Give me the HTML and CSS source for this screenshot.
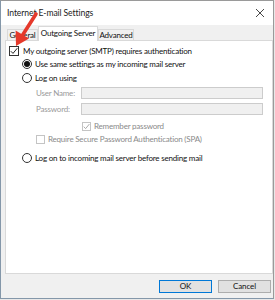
FILE: index.html
```html
<!DOCTYPE html>
<html>
<head>
  <meta charset='utf-8'>
  <title>Internet E-mail Settings</title>
  <link rel="stylesheet" href="styles.css">
</head>
<body>
  <div class="window">
    <div class="titlebar">
      <span class="title">Internet E-mail Settings</span>
      <svg class="close" width="10" height="10" viewBox="0 0 10 10"><path d="M1 1L9 9M9 1L1 9" stroke="#333" stroke-width="0.9" fill="none"/></svg>
    </div>
    <div class="main">
      <div class="tabs">
        <div class="tab general">General</div>
        <div class="tab active outgoing">Outgoing Server</div>
        <div class="tab advanced">Advanced</div>
      </div>
      <div class="panel">
        <div class="row r1">
          <span class="box"><svg width="8" height="8" viewBox="0 0 8 8"><path d="M0.8 4.2L3 6.4L7.3 1.2" stroke="#222" stroke-width="1" fill="none"/></svg></span>
          <span>My outgoing server (SMTP) requires authentication</span>
        </div>
        <div class="row r2 indent1">
          <span class="radio on"></span>
          <span>Use same settings as my incoming mail server</span>
        </div>
        <div class="row r3 indent1">
          <span class="radio"></span>
          <span>Log on using</span>
        </div>
        <div class="row field r4 indent2">
          <span class="label">User Name:</span>
          <span class="input"></span>
        </div>
        <div class="row field r5 indent2">
          <span class="label">Password:</span>
          <span class="input"></span>
        </div>
        <div class="row r6 indent3 disabled">
          <span class="box small off"><svg width="7" height="7" viewBox="0 0 8 8"><path d="M0.8 4.2L3 6.4L7.3 1.2" stroke="#a0a0a0" stroke-width="1" fill="none"/></svg></span>
          <span>Remember password</span>
        </div>
        <div class="row r7 indent2 disabled">
          <span class="box small off"></span>
          <span>Require Secure Password Authentication (SPA)</span>
        </div>
        <div class="row r8 indent1">
          <span class="radio"></span>
          <span>Log on to incoming mail server before sending mail</span>
        </div>
      </div>
      <div class="buttons">
        <button class="btn default">OK</button>
        <button class="btn">Cancel</button>
      </div>
    </div>
    <svg class="arrow" width="40" height="50" viewBox="0 0 40 50">
      <line x1="36" y1="14" x2="22" y2="36" stroke="#e5392b" stroke-width="3.6" stroke-linecap="round"/>
      <polygon points="16,46 29,38.4 15.6,30.6" fill="#e5392b"/>
    </svg>
  </div>
</body>
</html>
```

FILE: styles.css
```css
* {
  box-sizing: border-box;
}
body {
  margin: 0;
  background: #e8e8e8;
  font-family: Lato, "Noto Sans", sans-serif;
  font-size: 8px;
  letter-spacing: -0.2px;
  color: #111;
}
.window {
  position: relative;
  width: 274px;
  height: 299px;
  border: 1px solid #8497a9;
  border-top-color: #9a9a9a;
  border-right-color: #9a9a9a;
  background: #f0f0f0;
}
.titlebar {
  height: 24px;
  background: #fff;
  display: flex;
  align-items: center;
  justify-content: space-between;
  padding: 0 6px 0 6px;
}
.title {
  font-size: 8.6px;
  letter-spacing: -0.1px;
  color: #222;
}
.close {
  margin-right: 2px;
}
.main {
  padding: 1px 0 0 4px;
}
.tabs {
  height: 14px;
  display: flex;
  align-items: flex-end;
  padding-left: 2px;
}
.tab {
  height: 11px;
  line-height: 10px;
  text-align: center;
  border: 1px solid #d9d9d9;
  border-bottom: none;
  background: #f0f0f0;
  color: #111;
}
.tab.general { width: 31px; }
.tab.outgoing { width: 60px; }
.tab.advanced { width: 36px; }
.tab.active {
  height: 15px;
  line-height: 13px;
  margin-bottom: -1px;
  background: #fff;
  position: relative;
  z-index: 1;
}
.panel {
  height: 234px;
  border: 1px solid #d9d9d9;
  background: #fff;
  padding-left: 3px;
}
.row {
  height: 12px;
  display: flex;
  align-items: center;
  white-space: nowrap;
}
.r1 { margin-top: 4px; }
.r2 { margin-top: 1px; }
.r3 { margin-top: 2px; }
.r4 { margin-top: 3px; }
.r5 { margin-top: 4px; }
.r6 { margin-top: 5px; }
.r7 { margin-top: 1px; }
.r8 { margin-top: 7px; }
.indent1 { padding-left: 13px; }
.indent2 { padding-left: 27px; }
.indent3 { padding-left: 73px; }
.box {
  width: 10px;
  height: 10px;
  border: 1px solid #333;
  background: #fff;
  margin-right: 4px;
  display: flex;
  align-items: center;
  justify-content: center;
}
.box.small {
  width: 9px;
  height: 9px;
  margin-right: 3px;
}
.box.off {
  border-color: #c4c4c4;
}
.radio {
  width: 10px;
  height: 10px;
  border: 1px solid #333;
  border-radius: 50%;
  margin-right: 3px;
  display: flex;
  align-items: center;
  justify-content: center;
}
.radio.on::after {
  content: "";
  width: 6px;
  height: 6px;
  border-radius: 50%;
  background: #111;
}
.disabled {
  color: #8a8a8a;
}
.field .label {
  width: 45px;
  color: #9a9a9a;
}
.input {
  width: 182px;
  height: 12px;
  border: 1px solid #cccccc;
  background: #f0f0f0;
}
.buttons {
  display: flex;
  justify-content: flex-end;
  gap: 6px;
  margin-top: 6px;
  padding-right: 2px;
}
.btn {
  width: 53px;
  height: 13px;
  padding: 0;
  font-family: inherit;
  font-size: 8px;
  letter-spacing: -0.1px;
  line-height: 11px;
  color: #111;
  background: #e1e1e1;
  border: 1px solid #adadad;
}
.btn.default {
  border-color: #0078d7;
}
.arrow {
  position: absolute;
  left: -1px;
  top: -1px;
}
```
